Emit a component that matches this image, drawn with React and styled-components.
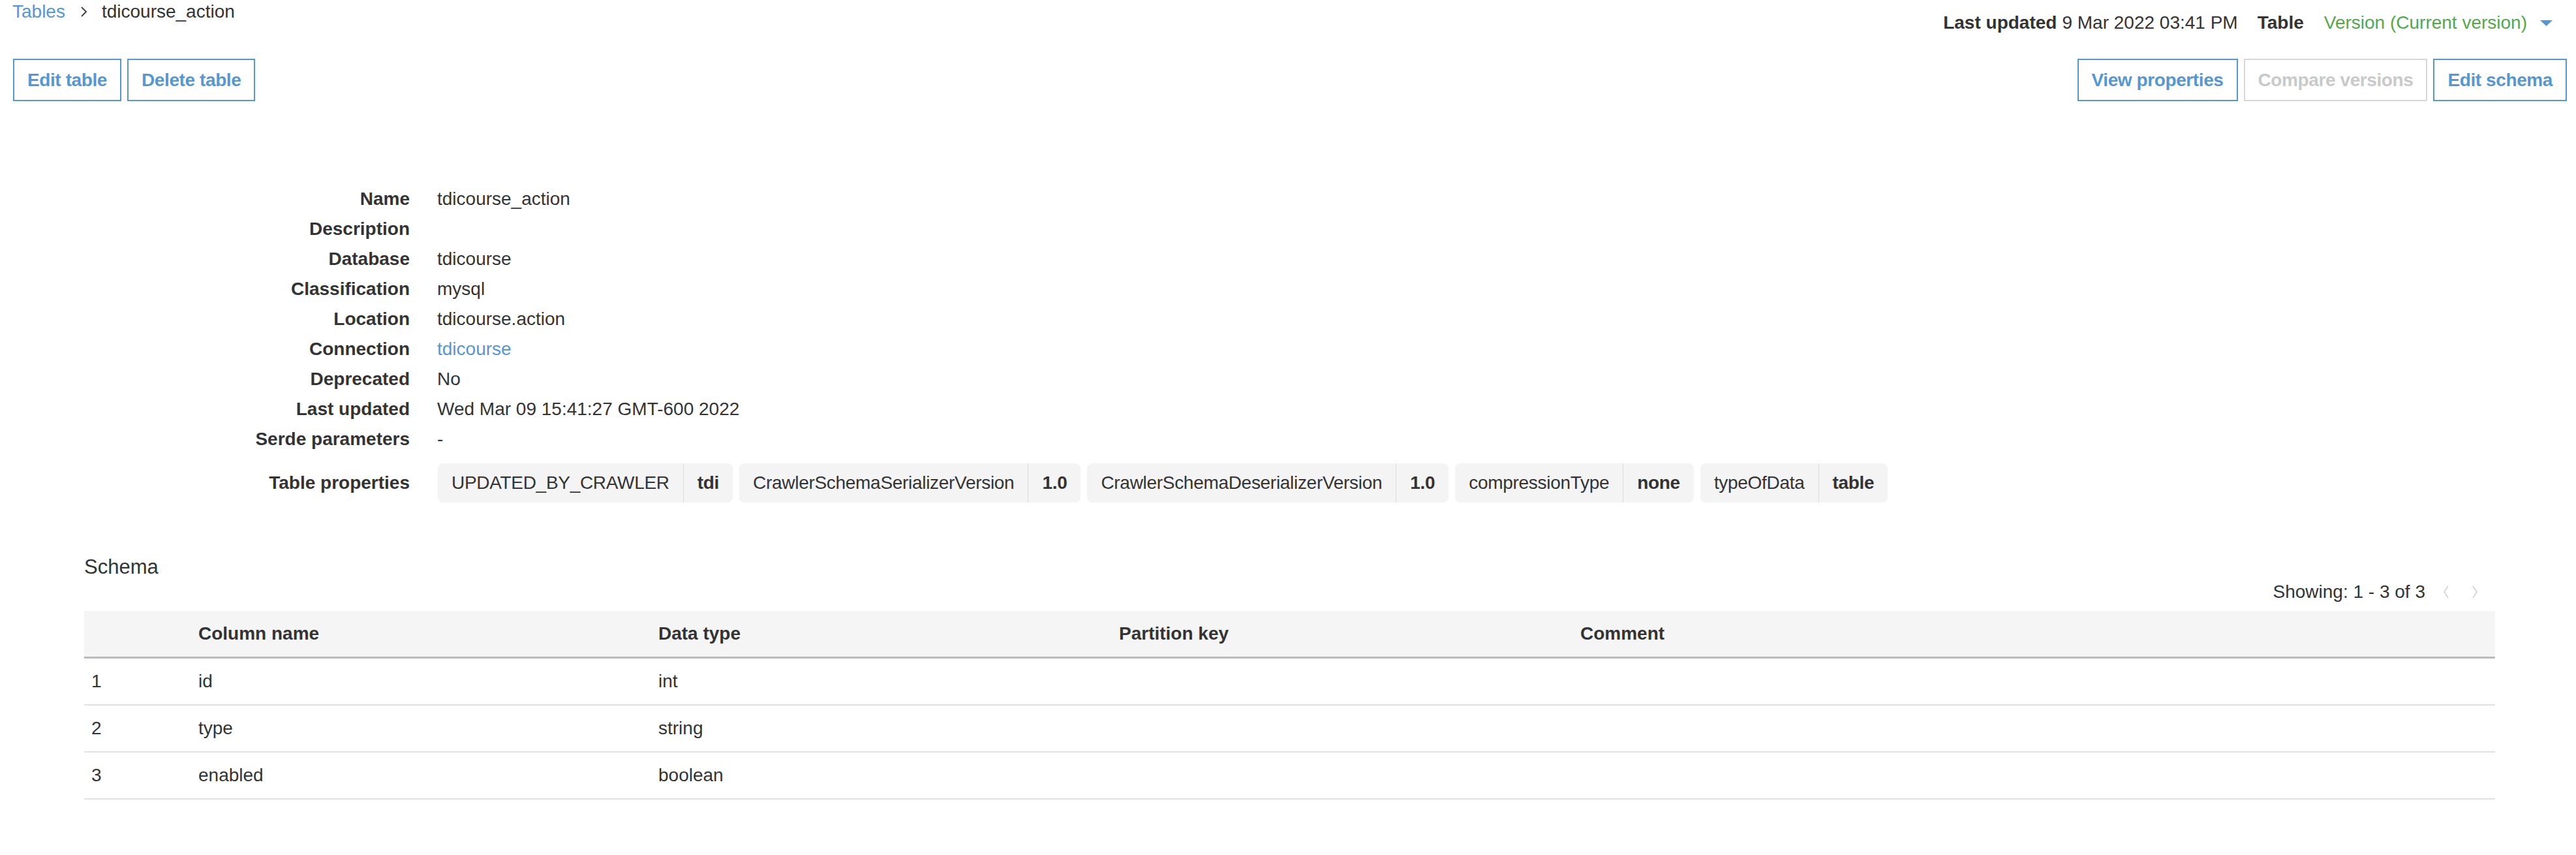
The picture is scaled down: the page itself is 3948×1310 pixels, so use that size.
import React from 'react'
import styled, { createGlobalStyle } from 'styled-components'

const blue = '#5597d4'
const text = '#333'

const GlobalStyle = createGlobalStyle`
  body {
    margin: 0;
    background: #fff;
    font-family: "Liberation Sans", Arial, sans-serif;
    color: ${text};
  }
  * { box-sizing: border-box; }
`

const Page = styled.div`
  padding: 0 14px 40px 20px;
  font-size: 28px;
`

const TopBar = styled.div`
  display: flex;
  justify-content: space-between;
  align-items: flex-start;
  height: 53px;
`

const Breadcrumb = styled.nav`
  display: flex;
  align-items: center;
  gap: 22px;
  line-height: 36px;
  margin-left: -1px;
`

const Crumb = styled.a`
  color: ${blue};
  text-decoration: none;
`

const Meta = styled.div`
  display: flex;
  align-items: center;
  margin-top: 17px;
  margin-right: 22px;
  line-height: 36px;
`

const MetaItem = styled.span`
  margin-left: ${p => p.$gap || 0}px;
  color: ${p => p.$green ? '#52a84a' : text};
  font-weight: ${p => p.$bold ? 700 : 400};
`

const Caret = styled.svg`
  margin-left: 20px;
  display: block;
`

const ActionBar = styled.div`
  display: flex;
  justify-content: space-between;
  margin-top: 37px;
`

const ButtonGroup = styled.div`
  display: flex;
  gap: 9px;
`

const Button = styled.button`
  height: 65px;
  padding: 0 20px;
  background: #fff;
  border: 2px solid ${p => p.disabled ? '#d6d6d6' : blue};
  color: ${p => p.disabled ? '#c9c9c9' : blue};
  font-family: inherit;
  font-size: 28px;
  font-weight: 700;
  letter-spacing: -0.4px;
  cursor: ${p => p.disabled ? 'default' : 'pointer'};
`

const Details = styled.div`
  margin-top: 127px;
`

const Row = styled.div`
  display: flex;
  align-items: center;
  min-height: ${p => p.$chips ? 60 : 46}px;
  margin-top: ${p => p.$chips ? 14 : 0}px;
`

const Label = styled.div`
  width: 608px;
  flex-shrink: 0;
  text-align: right;
  font-weight: 700;
  line-height: 46px;
`

const Value = styled.div`
  margin-left: 42px;
  line-height: 46px;
`

const Link = styled.a`
  color: ${blue};
  text-decoration: none;
`

const Chips = styled.div`
  display: flex;
  flex-wrap: wrap;
  gap: 10px;
  margin-left: 43px;
`

const Chip = styled.div`
  display: flex;
  height: 60px;
  background: #f4f4f4;
  border-radius: 8px;
  line-height: 60px;
`

const ChipPart = styled.span`
  padding: 0 21px;
  letter-spacing: -0.3px;
  font-weight: ${p => p.$value ? 700 : 400};
  border-left: ${p => p.$value ? '1px solid #dcdcdc' : 'none'};
`

const Schema = styled.section`
  margin: 79px 110px 0 109px;
`

const SchemaHeader = styled.div`
  display: flex;
  justify-content: space-between;
  height: 78px;
`

const Title = styled.h2`
  margin: 0;
  align-self: flex-start;
  font-size: 31px;
  font-weight: 400;
  line-height: 40px;
`

const Pagination = styled.div`
  align-self: flex-end;
  display: flex;
  align-items: center;
  gap: 28px;
  padding-right: 27px;
  line-height: 40px;
`

const Arrows = styled.div`
  display: flex;
  gap: 36px;
`

const Table = styled.table`
  width: 100%;
  margin-top: 9px;
  border-collapse: collapse;
  table-layout: fixed;
  font-size: 28px;
`

const Th = styled.th`
  background: #f5f5f5;
  border-bottom: 3px solid #bbb;
  padding: 17px 12px 17px ${p => p.$num ? 11 : 12}px;
  line-height: 36px;
  text-align: left;
  font-weight: 700;
`

const Td = styled.td`
  border-bottom: 2px solid #e0e0e0;
  padding: 17px 12px 17px ${p => p.$num ? 11 : 12}px;
  line-height: 36px;
`

const Chevron = ({ dir }) => (
  <svg width="8" height="20" viewBox="0 0 8 20">
    <polyline
      points={dir === 'left' ? '7,1 1,10 7,19' : '1,1 7,10 1,19'}
      fill="none"
      stroke="#d0d0d0"
      strokeWidth="1.5"
    />
  </svg>
)

const details = [
  ['Name', 'tdicourse_action'],
  ['Description', ''],
  ['Database', 'tdicourse'],
  ['Classification', 'mysql'],
  ['Location', 'tdicourse.action'],
  ['Connection', <Link href="#">tdicourse</Link>],
  ['Deprecated', 'No'],
  ['Last updated', 'Wed Mar 09 15:41:27 GMT-600 2022'],
  ['Serde parameters', '-'],
]

const properties = [
  ['UPDATED_BY_CRAWLER', 'tdi'],
  ['CrawlerSchemaSerializerVersion', '1.0'],
  ['CrawlerSchemaDeserializerVersion', '1.0'],
  ['compressionType', 'none'],
  ['typeOfData', 'table'],
]

const columns = [
  ['1', 'id', 'int'],
  ['2', 'type', 'string'],
  ['3', 'enabled', 'boolean'],
]

export default function App() {
  return (
    <Page>
      <GlobalStyle />
      <TopBar>
        <Breadcrumb>
          <Crumb href="#">Tables</Crumb>
          <svg width="12" height="18" viewBox="0 0 12 18">
            <polyline points="3,2 10,9 3,16" fill="none" stroke="#444" strokeWidth="2" />
          </svg>
          <span>tdicourse_action</span>
        </Breadcrumb>
        <Meta>
          <MetaItem $bold>Last updated</MetaItem>
          <MetaItem $gap={8}>9 Mar 2022 03:41 PM</MetaItem>
          <MetaItem $bold $gap={30}>Table</MetaItem>
          <MetaItem $green $gap={31}>Version (Current version)</MetaItem>
          <Caret width="19" height="9" viewBox="0 0 19 9">
            <polygon points="0,0 19,0 9.5,9" fill={blue} />
          </Caret>
        </Meta>
      </TopBar>

      <ActionBar>
        <ButtonGroup>
          <Button>Edit table</Button>
          <Button>Delete table</Button>
        </ButtonGroup>
        <ButtonGroup>
          <Button>View properties</Button>
          <Button disabled>Compare versions</Button>
          <Button>Edit schema</Button>
        </ButtonGroup>
      </ActionBar>

      <Details>
        {details.map(([label, value]) => (
          <Row key={label}>
            <Label>{label}</Label>
            <Value>{value}</Value>
          </Row>
        ))}
        <Row $chips>
          <Label>Table properties</Label>
          <Chips>
            {properties.map(([k, v]) => (
              <Chip key={k}>
                <ChipPart>{k}</ChipPart>
                <ChipPart $value>{v}</ChipPart>
              </Chip>
            ))}
          </Chips>
        </Row>
      </Details>

      <Schema>
        <SchemaHeader>
          <Title>Schema</Title>
          <Pagination>
            <span>Showing: 1 - 3 of 3</span>
            <Arrows>
              <Chevron dir="left" />
              <Chevron dir="right" />
            </Arrows>
          </Pagination>
        </SchemaHeader>
        <Table>
          <colgroup>
            <col style={{ width: 163 }} />
            <col style={{ width: 705 }} />
            <col style={{ width: 706 }} />
            <col style={{ width: 707 }} />
            <col />
          </colgroup>
          <thead>
            <tr>
              <Th $num></Th>
              <Th>Column name</Th>
              <Th>Data type</Th>
              <Th>Partition key</Th>
              <Th>Comment</Th>
            </tr>
          </thead>
          <tbody>
            {columns.map(([n, name, type]) => (
              <tr key={n}>
                <Td $num>{n}</Td>
                <Td>{name}</Td>
                <Td>{type}</Td>
                <Td></Td>
                <Td></Td>
              </tr>
            ))}
          </tbody>
        </Table>
      </Schema>
    </Page>
  )
}
